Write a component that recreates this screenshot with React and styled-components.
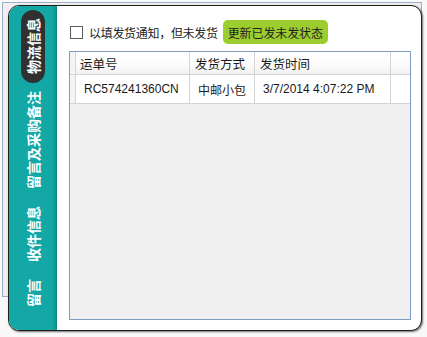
import React from "react";
import styled, { createGlobalStyle } from "styled-components";

const GlobalStyle = createGlobalStyle`
  html, body {
    margin: 0;
    padding: 0;
    background: #f9f9f9;
    font-family: "Liberation Sans", "Noto Sans CJK SC", sans-serif;
  }
`;

const Page = styled.div`
  position: relative;
  width: 427px;
  height: 337px;
  padding: 5px 0 0 8px;
  box-sizing: border-box;
`;

// window lying behind the card
const Backdrop = styled.div`
  position: absolute;
  left: 2px;
  top: 2px;
  width: 420px;
  height: 295px;
  background: #f0f0f0;
  border: 1px solid #9aaecb;
  box-sizing: border-box;
`;

const Card = styled.div`
  position: relative;
  display: flex;
  width: 414px;
  height: 326px;
  box-sizing: border-box;
  border: 1px solid #1e1e1e;
  border-radius: 11px;
  overflow: hidden;
  background: #fff;
  box-shadow: 1px 1px 2px rgba(0, 0, 0, 0.55);
`;

const Sidebar = styled.nav`
  width: 48px;
  flex-shrink: 0;
  display: flex;
  flex-direction: column;
  align-items: center;
  padding-top: 4px;
  background: linear-gradient(to right, #13a7a6 0, #13a7a6 43px, #0f9392 47px, #0c8382 48px);
`;

const Tab = styled.div`
  writing-mode: vertical-rl;
  text-orientation: sideways;
  transform: rotate(180deg);
  white-space: nowrap;
  width: 24px;
  padding: 8.5px 0;
  box-sizing: border-box;
  text-align: center;
  border-radius: 12px;
  background: ${(p) => (p.active ? "#303030" : "transparent")};
  color: #fff;
  font-family: "Noto Sans CJK SC", sans-serif;
  font-weight: 700;
  font-size: 14px;
  line-height: 24px;
`;

const Content = styled.main`
  flex: 1;
  display: flex;
  flex-direction: column;
  padding: 14px 10px 10px 12px;
  box-sizing: border-box;
`;

const Toolbar = styled.div`
  display: flex;
  align-items: center;
  height: 24px;
  margin-bottom: 7px;
`;

const CheckBox = styled.span`
  width: 11px;
  height: 11px;
  border: 1px solid #5c5c5c;
  background: #fff;
  margin: 0 6px 0 1px;
`;

const Label = styled.span`
  font-family: "Noto Sans CJK SC", sans-serif;
  font-size: 12px;
  color: #222;
  letter-spacing: -0.3px;
`;

const UpdateButton = styled.button`
  margin-left: 5px;
  height: 24px;
  padding: 0 5px;
  border: none;
  border-radius: 5px;
  background: #9bcd2f;
  color: #1f1f1f;
  font-family: "Noto Sans CJK SC", sans-serif;
  font-size: 12px;
  letter-spacing: -0.1px;
`;

const Grid = styled.div`
  flex: 1;
  border: 1px solid #7f9bbd;
  background: #f0f0f0;
`;

const Row = styled.div`
  display: grid;
  grid-template-columns: 6px 114px 65px 136px 19px;
  height: ${(p) => (p.header ? "22px" : "28px")};
  background: ${(p) =>
    p.header ? "linear-gradient(#ffffff, #fbfbfb 60%, #f1f1f1)" : "#fff"};
  border-bottom: 1px solid #d4d4d4;
`;

const Cell = styled.div`
  display: flex;
  align-items: center;
  padding-left: ${(p) => p.pad || 8}px;
  border-right: 1px solid #d4d4d4;
  font-family: ${(p) =>
    p.header ? '"Noto Sans CJK SC", sans-serif' : '"Liberation Sans", "Noto Sans CJK SC", sans-serif'};
  font-size: ${(p) => (p.header ? "12.5px" : "12px")};
  color: #1a1a1a;
  white-space: nowrap;
  overflow: hidden;
`;

const RowHead = styled.div`
  background: #f4f4f4;
  border-right: 1px solid #d4d4d4;
`;

const Filler = styled.div``;

const columns = [
  { title: "运单号", pad: 4 },
  { title: "发货方式", pad: 5 },
  { title: "发货时间", pad: 5 },
];
const rows = [["RC574241360CN", "中邮小包", "3/7/2014 4:07:22 PM"]];
const tabs = ["物流信息", "留言及采购备注", "收件信息", "留言"];

export default function App() {
  return (
    <>
      <GlobalStyle />
      <Page>
        <Backdrop />
        <Card>
          <Sidebar>
            {tabs.map((t, i) => (
              <Tab key={t} active={i === 0}>
                {t}
              </Tab>
            ))}
          </Sidebar>
          <Content>
            <Toolbar>
              <CheckBox />
              <Label>以填发货通知，但未发货</Label>
              <UpdateButton>更新已发未发状态</UpdateButton>
            </Toolbar>
            <Grid>
              <Row header>
                <RowHead />
                {columns.map((c) => (
                  <Cell header key={c.title} pad={c.pad}>
                    {c.title}
                  </Cell>
                ))}
                <Filler />
              </Row>
              {rows.map((r) => (
                <Row key={r[0]}>
                  <RowHead />
                  {r.map((v) => (
                    <Cell key={v}>{v}</Cell>
                  ))}
                  <Filler />
                </Row>
              ))}
            </Grid>
          </Content>
        </Card>
      </Page>
    </>
  );
}
